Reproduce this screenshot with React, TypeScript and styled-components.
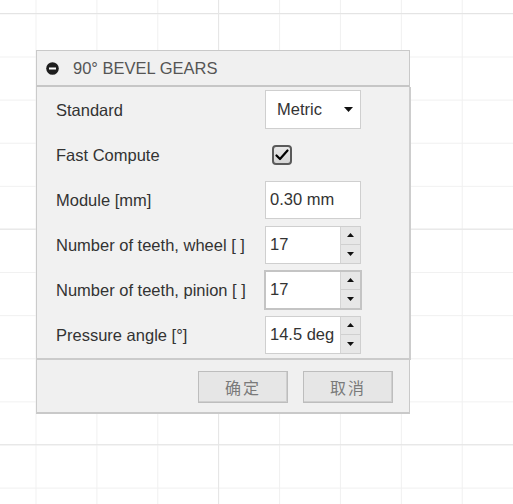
import React from "react";
import styled, { createGlobalStyle } from "styled-components";

const Global = createGlobalStyle`
  html, body { margin: 0; padding: 0; background: #ffffff; }
  * { box-sizing: border-box; }
`;

const Canvas = styled.div`
  width: 513px;
  height: 504px;
  overflow: hidden;
  padding: 50px 0 0 36px;
  font-family: "Liberation Sans", Arial, sans-serif;
  background-color: #ffffff;
  background-image:
    linear-gradient(to right, #e6e6e6 1px, transparent 1px),
    linear-gradient(to bottom, #e4e4e4 1px, transparent 1px),
    linear-gradient(to right, #f0f0f0 1px, transparent 1px),
    linear-gradient(to bottom, #f0f0f0 1px, transparent 1px);
  background-size: 304.5px 100%, 100% 215.6px, 60.9px 100%, 100% 43.12px;
  background-position: 218px 0, 0 13px, 35.5px 0, 0 13.4px;
`;

const Panel = styled.div`
  width: 374px;
  display: flex;
  flex-direction: column;
`;

const Header = styled.div`
  height: 37px;
  display: flex;
  align-items: center;
  gap: 14px;
  padding-left: 9px;
  background: #f0f0f0;
  border: 1px solid #c9c9c9;
  border-bottom: 2px solid #c6c6c6;
  width: 374px;
  color: #555555;
  font-size: 16.5px;
`;

const Body = styled.div`
  width: 375px;
  background: #f1f1f1;
  border-left: 1px solid #cbcbcb;
  border-right: 2px solid #cdcdcd;
  border-bottom: 2px solid #cbcbcb;
  padding: 0 0 1px 19px;
  display: grid;
  grid-template-columns: 209px 1fr;
  grid-auto-rows: 45px;
  align-items: center;
`;

const Label = styled.div`
  font-size: 16.5px;
  color: #333333;
  padding-top: 1px;
`;

const Select = styled.div`
  width: 96px;
  height: 39px;
  background: #ffffff;
  border: 1px solid #cfcfcf;
  display: flex;
  align-items: center;
  justify-content: space-between;
  padding: 0 7px 0 11px;
  font-size: 16.5px;
  color: #333;
`;

const Check = styled.div`
  width: 20px;
  height: 20px;
  margin-left: 7px;
  border: 2px solid #5a5a5a;
  border-radius: 4px;
  background: linear-gradient(#e8e8e8, #d6d6d6);
  display: flex;
  align-items: center;
  justify-content: center;
`;

const Field = styled.div<{ $focused?: boolean }>`
  width: ${(p) => (p.$focused ? 98 : 96)}px;
  height: ${(p) => (p.$focused ? 40 : 38)}px;
  margin-left: ${(p) => (p.$focused ? -1 : 0)}px;
  background: #ffffff;
  border: ${(p) => (p.$focused ? "2px solid #c4c4c4" : "1px solid #cfcfcf")};
  display: flex;
  align-items: stretch;
  font-size: 16.5px;
  color: #333;
`;

const FieldText = styled.div`
  flex: 1;
  display: flex;
  align-items: center;
  padding-left: 4px;
  white-space: nowrap;
  overflow: hidden;
`;

const Spinner = styled.div`
  width: 20px;
  display: flex;
  flex-direction: column;
  border-left: 1px solid #d4d4d4;
`;

const SpinBtn = styled.div<{ $down?: boolean }>`
  flex: 1;
  background: #e7e7e7;
  display: flex;
  align-items: center;
  justify-content: center;
  border-top: ${(p) => (p.$down ? "1px solid #d0d0d0" : "none")};
`;

const Footer = styled.div`
  width: 374px;
  height: 54px;
  background: #f0f0f0;
  border-left: 1px solid #cbcbcb;
  border-right: 1px solid #c9c9c9;
  border-bottom: 2px solid #c9c9c9;
  display: flex;
  justify-content: flex-end;
  align-items: flex-start;
  gap: 15px;
  padding: 11px 16px 0 0;
`;

const Button = styled.div`
  width: 90px;
  height: 32px;
  background: #e6e6e6;
  border: 1px solid #bdbdbd;
  box-shadow: inset -1px -1px 0 #cfcfcf;
  display: flex;
  align-items: center;
  justify-content: center;
  font-family: "Noto Sans CJK SC", sans-serif;
  font-size: 16px;
  letter-spacing: 2px;
  color: #7a7a7a;
`;

const Triangle = ({ down, w = 8, h = 5 }: { down?: boolean; w?: number; h?: number }) => (
  <svg width={w} height={h} viewBox={`0 0 ${w} ${h}`}>
    <polygon
      points={down ? `0,0 ${w},0 ${w / 2},${h}` : `0,${h} ${w},${h} ${w / 2},0`}
      fill="#111"
    />
  </svg>
);

const NumberField = ({ value, focused }: { value: string; focused?: boolean }) => (
  <Field $focused={focused}>
    <FieldText>{value}</FieldText>
    <Spinner>
      <SpinBtn>
        <Triangle w={7} h={4} />
      </SpinBtn>
      <SpinBtn $down>
        <Triangle down w={7} h={4} />
      </SpinBtn>
    </Spinner>
  </Field>
);

export default function App() {
  return (
    <>
      <Global />
      <Canvas>
        <Panel>
          <Header>
            <svg width="13" height="13" viewBox="0 0 13 13">
              <circle cx="6.5" cy="6.5" r="6.3" fill="#1e1e1e" />
              <rect x="3" y="5.5" width="7" height="2" fill="#ffffff" />
            </svg>
            <span>90° BEVEL GEARS</span>
          </Header>
          <Body>
            <Label>Standard</Label>
            <Select>
              <span>Metric</span>
              <Triangle down w={9} h={5} />
            </Select>
            <Label>Fast Compute</Label>
            <Check>
              <svg width="14" height="12" viewBox="0 0 14 12">
                <polyline
                  points="1.5,6.5 5,10 12.5,1.5"
                  fill="none"
                  stroke="#000"
                  strokeWidth="2.2"
                  strokeLinecap="round"
                  strokeLinejoin="round"
                />
              </svg>
            </Check>
            <Label>Module [mm]</Label>
            <Field>
              <FieldText>0.30 mm</FieldText>
            </Field>
            <Label>Number of teeth, wheel [ ]</Label>
            <NumberField value="17" />
            <Label>Number of teeth, pinion [ ]</Label>
            <NumberField value="17" focused />
            <Label>Pressure angle [°]</Label>
            <NumberField value="14.5 deg" />
          </Body>
          <Footer>
            <Button>确定</Button>
            <Button>取消</Button>
          </Footer>
        </Panel>
      </Canvas>
    </>
  );
}
